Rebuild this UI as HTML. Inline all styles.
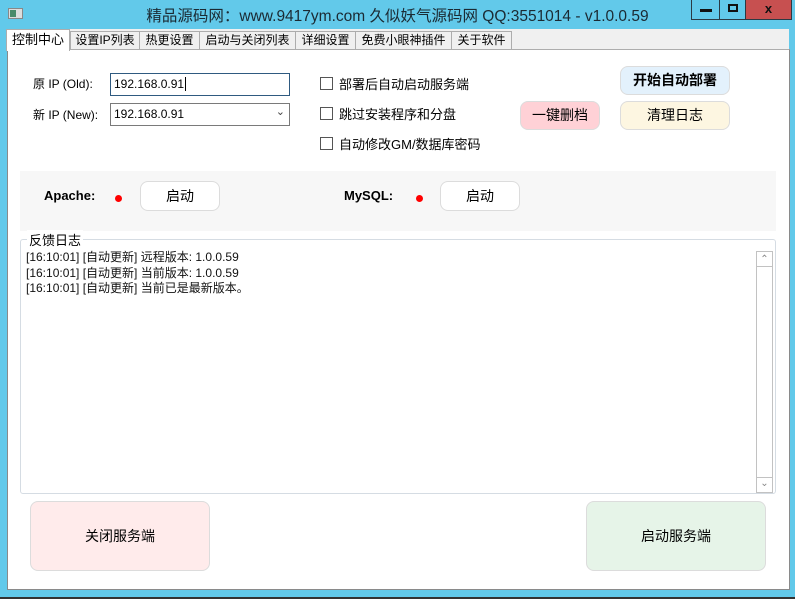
<!DOCTYPE html>
<html><head><meta charset="utf-8"><style>
*{margin:0;padding:0;box-sizing:border-box}
body{width:795px;height:599px;background:#62c9ea;position:relative;overflow:hidden;font-family:"Liberation Sans","Noto Sans CJK SC",sans-serif;font-size:13px;color:#000}
.a{position:absolute}
.title{left:0;width:795px;top:4px;text-align:center;font-size:15.5px;color:#1b2a33}
.wb{top:0;height:20px;border:1px solid #2b3a44;border-top:none}
.tabs{left:7px;top:29px;width:782px;height:21px;background:#f0f0f0}
.tab{top:31px;height:19px;border:1px solid #adadad;background:#f0f0f0;font-size:12px;text-align:center;line-height:17px}
.panel{left:7px;top:49px;width:783px;height:541px;background:#fff;border:1px solid #8a8a8a;border-top:1px solid #adadad}
.btn{border:1px solid #dcdcdc;border-radius:8px;text-align:center;font-size:14px}
.cb{width:13px;height:13px;border:1px solid #555;background:#fff}
.lbl{font-size:13px}
.log{font-size:12px;line-height:15.5px;color:#111}
</style></head><body>
<div class="a" style="left:8px;top:8px;width:15px;height:11px;background:#ddd;border:1px solid #888"><div style="width:6px;height:7px;margin:1px;background:#4a8a6a"></div></div>
<div class="a title">精品源码网：www.9417ym.com 久似妖气源码网 QQ:3551014 - v1.0.0.59</div>
<div class="a wb" style="left:691px;width:29px"><div style="width:12px;height:3px;background:#111;margin:9px auto 0"></div></div>
<div class="a wb" style="left:719px;width:27px"><div style="width:10px;height:8px;border:2px solid #111;margin:4px auto 0"></div></div>
<div class="a wb" style="left:745px;width:47px;background:#c75050;text-align:center;font-weight:bold;font-size:13px;line-height:17px;color:#111">x</div>
<div class="a tabs"></div>
<div class="a panel"></div>
<div class="a tab" style="left:70px;width:70px">设置IP列表</div>
<div class="a tab" style="left:139px;width:61px">热更设置</div>
<div class="a tab" style="left:199px;width:97px">启动与关闭列表</div>
<div class="a tab" style="left:295px;width:61px">详细设置</div>
<div class="a tab" style="left:355px;width:97px">免费小眼神插件</div>
<div class="a tab" style="left:451px;width:61px">关于软件</div>
<div class="a" style="left:6px;top:29px;width:64px;height:22px;background:#fff;border:1px solid #adadad;border-bottom:none;font-size:13px;text-align:center;line-height:20px">控制中心</div>

<div class="a lbl" style="left:33px;top:75px;font-size:12px">原 IP (Old):</div>
<div class="a lbl" style="left:33px;top:106px;font-size:12px">新 IP (New):</div>
<div class="a" style="left:110px;top:73px;width:180px;height:23px;border:1px solid #2f5a80;font-size:12px;padding:3px 0 0 3px">192.168.0.91<span style="border-left:1px solid #000;margin-left:1px"></span></div>
<div class="a" style="left:110px;top:103px;width:180px;height:23px;border:1px solid #7a7a7a;font-size:12px;padding:3px 0 0 3px">192.168.0.91<span style="position:absolute;right:4px;top:1px;font-size:11px;color:#444">&#8964;</span></div>

<div class="a cb" style="left:320px;top:77px"></div><div class="a lbl" style="left:339px;top:74px">部署后自动启动服务端</div>
<div class="a cb" style="left:320px;top:107px"></div><div class="a lbl" style="left:339px;top:104px">跳过安装程序和分盘</div>
<div class="a cb" style="left:320px;top:137px"></div><div class="a lbl" style="left:339px;top:134px">自动修改GM/数据库密码</div>

<div class="a btn" style="left:520px;top:101px;width:80px;height:29px;background:#ffd1d6;line-height:27px">一键删档</div>
<div class="a btn" style="left:620px;top:66px;width:110px;height:29px;background:#e3f1fc;line-height:27px;font-weight:bold">开始自动部署</div>
<div class="a btn" style="left:620px;top:101px;width:110px;height:29px;background:#fdf6e1;line-height:27px">清理日志</div>

<div class="a" style="left:20px;top:171px;width:756px;height:60px;background:#f7f7f7"></div>
<div class="a" style="left:44px;top:188px;font-weight:bold;font-size:13px">Apache:</div>
<div class="a" style="left:115px;top:195px;width:7px;height:7px;border-radius:50%;background:#f00"></div>
<div class="a btn" style="left:140px;top:181px;width:80px;height:30px;background:#fff;line-height:28px">启动</div>
<div class="a" style="left:344px;top:188px;font-weight:bold;font-size:13px">MySQL:</div>
<div class="a" style="left:416px;top:195px;width:7px;height:7px;border-radius:50%;background:#f00"></div>
<div class="a btn" style="left:440px;top:181px;width:80px;height:30px;background:#fff;line-height:28px">启动</div>

<div class="a" style="left:20px;top:239px;width:756px;height:255px;border:1px solid #d5dce3;border-radius:3px"></div>
<div class="a" style="left:27px;top:230px;background:#fff;padding:0 2px;font-size:13px">反馈日志</div>
<div class="a log" style="left:26px;top:250px">[16:10:01] [自动更新] 远程版本: 1.0.0.59<br>[16:10:01] [自动更新] 当前版本: 1.0.0.59<br>[16:10:01] [自动更新] 当前已是最新版本。</div>
<div class="a" style="left:756px;top:251px;width:17px;height:242px;border:1px solid #c2c2c2;background:#fff"></div>
<div class="a" style="left:756px;top:251px;width:17px;height:16px;border:1px solid #c2c2c2;font-size:10px;color:#888;text-align:center;line-height:16px">&#8963;</div>
<div class="a" style="left:756px;top:477px;width:17px;height:16px;border:1px solid #c2c2c2;font-size:10px;color:#888;text-align:center;line-height:12px">&#8964;</div>

<div class="a btn" style="left:30px;top:501px;width:180px;height:70px;background:#ffebeb;line-height:68px">关闭服务端</div>
<div class="a btn" style="left:586px;top:501px;width:180px;height:70px;background:#e6f4e8;line-height:68px">启动服务端</div>
<div class="a" style="left:0;top:597px;width:795px;height:2px;background:#333"></div>
</body></html>
